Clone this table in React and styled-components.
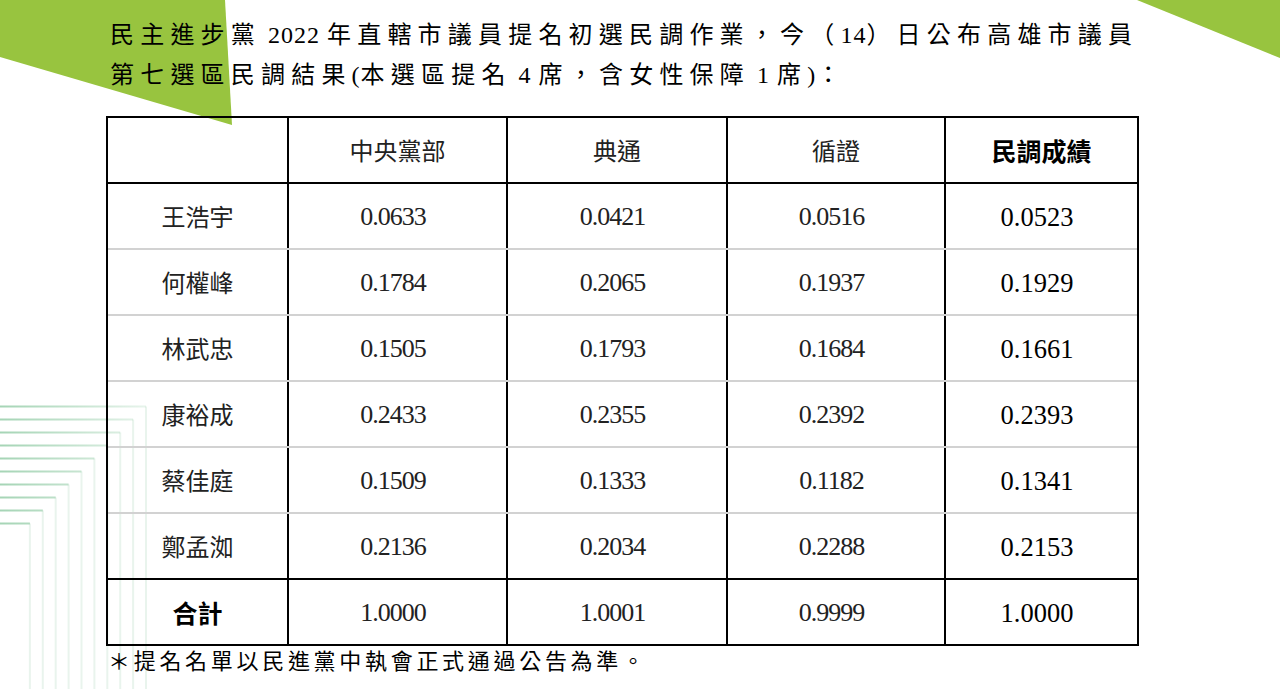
import React from "react";
import styled, { createGlobalStyle } from "styled-components";

const GlobalStyle = createGlobalStyle`
  html, body { margin: 0; padding: 0; background: #ffffff; }
  body { width: 1280px; height: 689px; overflow: hidden; }
`;

const Page = styled.div`
  position: relative;
  width: 1280px;
  height: 689px;
  overflow: hidden;
  background: #ffffff;
`;

const Decor = styled.svg`
  position: absolute;
  left: 0;
  top: 0;
  width: 1280px;
  height: 689px;
  z-index: 0;
  pointer-events: none;
`;

const Content = styled.div`
  position: relative;
  z-index: 1;
  padding: 15px 0 0 106px;
  display: flex;
  flex-direction: column;
`;

const Heading = styled.div`
  padding-left: 4px;
  font-family: "Liberation Serif", "Noto Sans CJK TC", serif;
  font-size: 24px;
  line-height: 40px;
  letter-spacing: 6.2px;
  color: #000;
`;

const HeadLine = styled.div`
  white-space: nowrap;
`;

const Latin = styled.span`
  letter-spacing: 1px;
`;

const Table = styled.div`
  margin-top: 21px;
  width: 1033px;
  box-sizing: border-box;
  border: 2px solid #000;
  display: flex;
  flex-direction: column;
`;

const Row = styled.div`
  display: grid;
  grid-template-columns: 181px 219px 220px 218px 191px;
  box-sizing: border-box;
  height: ${(p) => p.$h}px;
  border-bottom: ${(p) => (p.$line ? `2px solid ${p.$line}` : "none")};
`;

const Cell = styled.div`
  box-sizing: border-box;
  display: flex;
  align-items: center;
  justify-content: center;
  padding: ${(p) => (p.$num ? "2px 9px 0 0" : "0")};
  border-right: ${(p) => (p.$last ? "none" : "2px solid #000")};
  color: ${(p) => (p.$strong ? "#000" : "#222")};
  font-family: ${(p) =>
    p.$num
      ? `"Liberation Serif", "Times New Roman", serif`
      : `"Noto Sans CJK TC", "Noto Sans", sans-serif`};
  font-size: ${(p) => p.$size || 24}px;
  font-weight: ${(p) => (p.$bold ? 700 : 400)};
  letter-spacing: ${(p) => p.$ls || 0}px;
  line-height: 1;
`;

const Note = styled.div`
  padding-left: 2px;
  font-family: "Liberation Serif", "Noto Sans CJK TC", serif;
  font-size: 22px;
  line-height: 32px;
  letter-spacing: 3.7px;
  color: #000;
  white-space: nowrap;
`;

const cols = ["中央黨部", "典通", "循證"];

const rows = [
  ["王浩宇", "0.0633", "0.0421", "0.0516", "0.0523"],
  ["何權峰", "0.1784", "0.2065", "0.1937", "0.1929"],
  ["林武忠", "0.1505", "0.1793", "0.1684", "0.1661"],
  ["康裕成", "0.2433", "0.2355", "0.2392", "0.2393"],
  ["蔡佳庭", "0.1509", "0.1333", "0.1182", "0.1341"],
  ["鄭孟洳", "0.2136", "0.2034", "0.2288", "0.2153"],
];

const total = ["合計", "1.0000", "1.0001", "0.9999", "1.0000"];

function Lines() {
  const items = [];
  for (let i = 0; i < 10; i++) {
    const y = 406.5 + 13 * i;
    const x = 146 - 12.9 * i;
    items.push(
      <line key={"h" + i} x1="0" y1={y} x2={x} y2={y} stroke="url(#hfade)" strokeWidth="2" />
    );
    items.push(
      <line key={"v" + i} x1={x} y1={y} x2={x} y2="689" stroke="#8fcaa3" strokeOpacity="0.2" strokeWidth="2" />
    );
  }
  return items;
}

function Num({ children, last }) {
  return last ? (
    <Cell $num $last $strong $size={26.5}>{children}</Cell>
  ) : (
    <Cell $num $size={26} $ls={-1}>{children}</Cell>
  );
}

export default function App() {
  return (
    <Page>
      <GlobalStyle />
      <Decor viewBox="0 0 1280 689" preserveAspectRatio="none">
        <defs>
          <linearGradient id="hfade" gradientUnits="userSpaceOnUse" x1="0" y1="0" x2="160" y2="0">
            <stop offset="0" stopColor="#8fcaa3" stopOpacity="0.8" />
            <stop offset="0.5" stopColor="#8fcaa3" stopOpacity="0.5" />
            <stop offset="1" stopColor="#8fcaa3" stopOpacity="0.15" />
          </linearGradient>
        </defs>
        <polygon points="0,0 225,0 232,125 0,57" fill="#98c43f" />
        <polygon points="1137,0 1280,0 1280,58" fill="#98c43f" />
        <Lines />
      </Decor>
      <Content>
        <Heading>
          <HeadLine>
            民主進步黨<Latin> 2022 </Latin>年直轄市議員提名初選民調作業，今（<Latin>14</Latin>）日公布高雄市議員
          </HeadLine>
          <HeadLine>
            第七選區民調結果<Latin>(</Latin>本選區提名<Latin> 4 </Latin>席，含女性保障<Latin> 1 </Latin>席<Latin>)</Latin>：
          </HeadLine>
        </Heading>
        <Table>
          <Row $h={66} $line="#000">
            <Cell />
            {cols.map((c) => (
              <Cell key={c}>{c}</Cell>
            ))}
            <Cell $last $bold $strong $size={25}>民調成績</Cell>
          </Row>
          {rows.map((r, i) => (
            <Row key={r[0]} $h={66} $line={i === rows.length - 1 ? "#000" : "#d2d2d2"}>
              <Cell>{r[0]}</Cell>
              <Num>{r[1]}</Num>
              <Num>{r[2]}</Num>
              <Num>{r[3]}</Num>
              <Num last>{r[4]}</Num>
            </Row>
          ))}
          <Row $h={64}>
            <Cell $bold $strong $size={25}>{total[0]}</Cell>
            <Num>{total[1]}</Num>
            <Num>{total[2]}</Num>
            <Num>{total[3]}</Num>
            <Num last>{total[4]}</Num>
          </Row>
        </Table>
        <Note>＊提名名單以民進黨中執會正式通過公告為準。</Note>
      </Content>
    </Page>
  );
}
